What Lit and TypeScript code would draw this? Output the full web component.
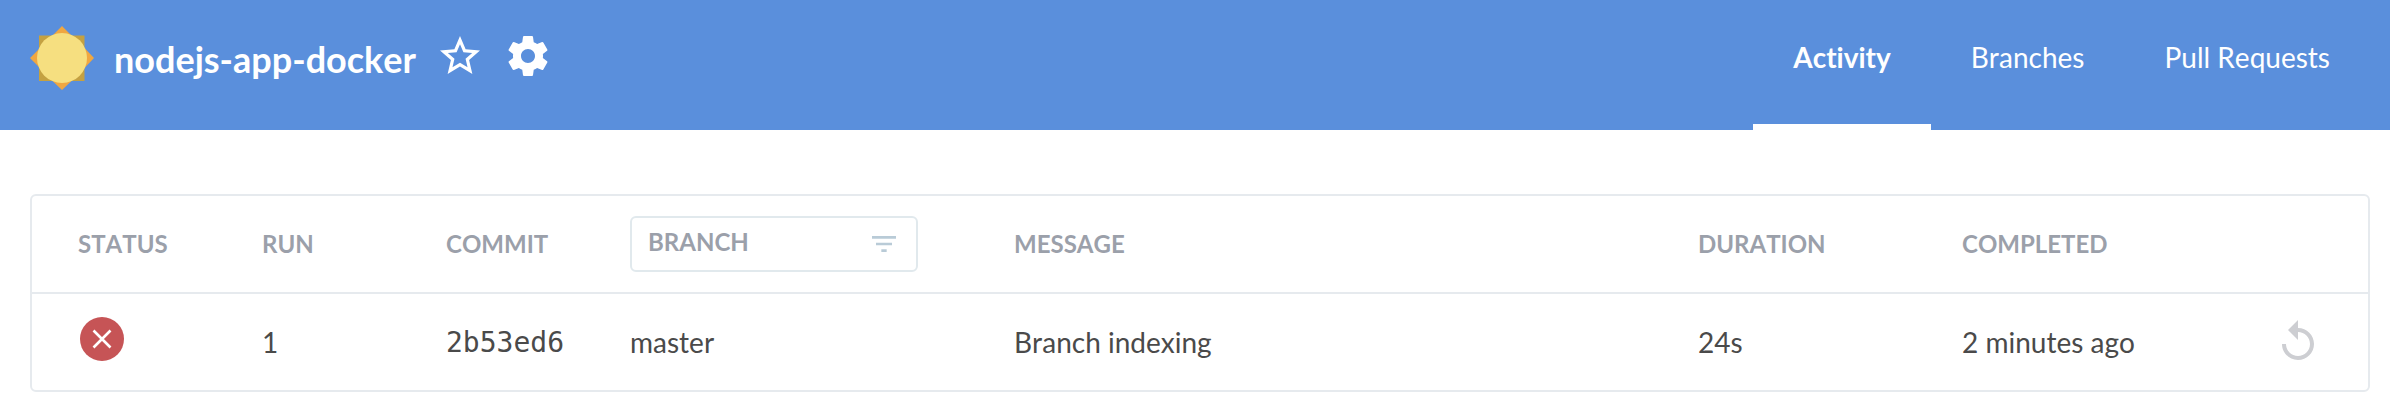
import { LitElement, html, css, svg } from "lit";
import { customElement, property, state } from "lit/decorators.js";
import { classMap } from "lit/directives/class-map.js";

interface Run {
  id: number;
  commit: string;
  branch: string;
  message: string;
  duration: string;
  completed: string;
}

const sunIcon = svg`
  <path d="M9 9.500h45.500v45.500h-45.500Z" fill="#c4a142"/>
  <path d="M32 0 41.500 9.500H22.500ZM64 32 54.500 22v20ZM32 64 22.500 55h19ZM0 32 9 23v18Z" fill="#f0a741"/>
  <circle cx="32" cy="32" r="25" fill="#f6df80"/>`;

@customElement("pipeline-header")
export class PipelineHeader extends LitElement {
  @property() name = "";
  @state() private active = "Activity";

  static styles = css`
    :host { display: block; background: #5a8fdc; color: #fff; }
    .bar { display: flex; justify-content: space-between; align-items: stretch; min-height: 130px; padding: 0 20px 0 30px; }
    .identity { display: flex; align-items: center; padding-bottom: 14px; }
    .weather { width: 64px; height: 64px; display: block; }
    .title { margin: 0 20px; padding-top: 2px; font-size: 36px; line-height: 44px; font-weight: 700; }
    .action { background: none; border: 0; padding: 0 0 4px; margin-right: 20px; display: block; color: inherit; cursor: pointer; }
    .glyph { width: 48px; height: 48px; display: block; fill: currentColor; }
    .tabs { display: flex; }
    .tab { display: flex; align-items: center; padding: 0 40px 10px; border-bottom: 6px solid transparent; color: inherit; text-decoration: none; font-size: 28px; line-height: 34px; white-space: nowrap; }
    .tab.active { border-bottom-color: #fff; font-weight: 700; }
  `;

  render() {
    return html`
      <header class="bar">
        <div class="identity">
          <svg class="weather" viewBox="0 0 64 64" aria-hidden="true">${sunIcon}</svg>
          <h1 class="title">${this.name}</h1>
          <button class="action" type="button" aria-label="Favorite">
            <svg class="glyph" viewBox="0 0 24 24"><path d="M22 9.240l-7.190-.620L12 2 9.190 8.630 2 9.240l5.460 4.730L5.820 21 12 17.270 18.180 21l-1.630-7.030L22 9.240zM12 15.400l-3.760 2.270 1-4.280-3.320-2.880 4.380-.380L12 6.100l1.710 4.040 4.380.380-3.320 2.880 1 4.280L12 15.400z"/></svg>
          </button>
          <button class="action" type="button" aria-label="Settings">
            <svg class="glyph" viewBox="0 0 24 24"><path d="M19.430 12.980c.040-.320.070-.640.070-.980s-.030-.660-.070-.980l2.110-1.650c.190-.150.240-.420.120-.640l-2-3.460c-.120-.220-.390-.300-.610-.220l-2.490 1c-.520-.400-1.080-.730-1.690-.980l-.380-2.650C14.460 2.180 14.250 2 14 2h-4c-.250 0-.460.180-.490.420l-.380 2.650c-.610.250-1.170.590-1.690.980l-2.490-1c-.230-.090-.490 0-.610.220l-2 3.460c-.130.220-.070.490.120.640l2.110 1.650c-.040.320-.070.650-.070.980s.030.660.070.980l-2.110 1.650c-.190.150-.240.420-.120.640l2 3.460c.120.220.390.300.610.220l2.490-1c.520.400 1.080.730 1.690.980l.380 2.650c.030.240.240.420.490.420h4c.250 0 .460-.180.490-.420l.380-2.650c.610-.250 1.170-.590 1.690-.980l2.490 1c.230.090.490 0 .610-.220l2-3.460c.120-.220.070-.490-.120-.640l-2.110-1.650zM12 15.500c-1.930 0-3.500-1.570-3.500-3.500s1.570-3.500 3.500-3.500 3.500 1.570 3.500 3.500-1.570 3.500-3.500 3.500z"/></svg>
          </button>
        </div>
        <nav class="tabs">
          ${["Activity", "Branches", "Pull Requests"].map(
            (tab) => html`<a
              class=${classMap({ tab: true, active: tab === this.active })}
              href="#"
              @click=${(e: Event) => { e.preventDefault(); this.active = tab; }}
            >${tab}</a>`
          )}
        </nav>
      </header>
    `;
  }
}

@customElement("runs-table")
export class RunsTable extends LitElement {
  @property({ attribute: false }) runs: Run[] = [];

  static styles = css`
    :host { display: block; border: 2px solid #e6eaee; border-radius: 6px; }
    .table { width: 100%; table-layout: fixed; border-collapse: separate; border-spacing: 0; color: #4a4a4a; font-size: 28px; line-height: 34px; }
    .c-status { width: 230px; }
    .c-short { width: 184px; }
    .c-branch { width: 384px; }
    .c-duration { width: 264px; }
    .c-completed { width: 312px; }
    .c-action { width: 94px; }
    .head, .cell { box-sizing: border-box; height: 96px; padding: 0; text-align: left; vertical-align: middle; }
    .head { height: 98px; border-bottom: 2px solid #e6eaee; color: #9ba0aa; font-size: 24px; line-height: 30px; font-weight: 700; }
    .head:first-child, .cell:first-child { padding-left: 46px; }
    .filter { box-sizing: border-box; display: flex; align-items: center; width: 288px; height: 56px; padding: 0 16px; border: 2px solid #e1e9ed; border-radius: 6px; }
    .query { flex: 1; min-width: 0; padding: 0 0 4px; border: 0; outline: 0; background: none; color: inherit; font: inherit; }
    .query::placeholder { color: #9ba0aa; opacity: 1; }
    .funnel { width: 32px; height: 32px; fill: #b9cbd7; }
    .hash { padding-top: 2px; font-family: "DejaVu Sans Mono", monospace; }
    .badge { width: 48px; height: 48px; display: block; margin-bottom: 6px; }
    .rerun { background: none; border: 0; padding: 0; display: block; color: #cdced2; cursor: pointer; }
    .glyph { width: 48px; height: 48px; display: block; fill: currentColor; }
  `;

  render() {
    return html`
      <table class="table">
        <colgroup>
          <col class="c-status" /><col class="c-short" /><col class="c-short" /><col class="c-branch" />
          <col /><col class="c-duration" /><col class="c-completed" /><col class="c-action" />
        </colgroup>
        <thead>
          <tr>
            <th class="head">STATUS</th>
            <th class="head">RUN</th>
            <th class="head">COMMIT</th>
            <th class="head">
              <label class="filter">
                <input class="query" type="text" placeholder="BRANCH" aria-label="Filter by branch" />
                <svg class="funnel" viewBox="0 0 24 24" aria-hidden="true"><path d="M3 6h18v2H3ZM6 11h12v2H6ZM10 16h4v2h-4Z"/></svg>
              </label>
            </th>
            <th class="head">MESSAGE</th>
            <th class="head">DURATION</th>
            <th class="head">COMPLETED</th>
            <td class="head"></td>
          </tr>
        </thead>
        <tbody>
          ${this.runs.map(
            (run) => html`<tr>
              <td class="cell">
                <svg class="badge" viewBox="0 0 48 48" role="img" aria-label="Failed">
                  <circle cx="24" cy="24" r="22" fill="#c65456" />
                  <path d="M15.500 15.500 32.500 32.500M32.500 15.500 15.500 32.500" stroke="#fff" stroke-width="2.600" />
                </svg>
              </td>
              <td class="cell">${run.id}</td>
              <td class="cell hash">${run.commit}</td>
              <td class="cell">${run.branch}</td>
              <td class="cell">${run.message}</td>
              <td class="cell">${run.duration}</td>
              <td class="cell">${run.completed}</td>
              <td class="cell">
                <button class="rerun" type="button" aria-label="Rerun">
                  <svg class="glyph" viewBox="0 0 24 24"><path d="M12 5V1L7 6l5 5V7c3.310 0 6 2.690 6 6s-2.690 6-6 6-6-2.690-6-6H4c0 4.420 3.580 8 8 8s8-3.580 8-8-3.580-8-8-8z"/></svg>
                </button>
              </td>
            </tr>`
          )}
        </tbody>
      </table>
    `;
  }
}

@customElement("app-root")
export class AppRoot extends LitElement {
  private runs: Run[] = [
    { id: 1, commit: "2b53ed6", branch: "master", message: "Branch indexing", duration: "24s", completed: "2 minutes ago" },
  ];

  static styles = css`
    :host { display: block; background: #fff; font-family: Lato, "Liberation Sans", sans-serif; font-kerning: none; font-variant-ligatures: none; }
    .content { padding: 64px 20px 26px 30px; }
  `;

  render() {
    return html`
      <pipeline-header name="nodejs-app-docker"></pipeline-header>
      <main class="content"><runs-table .runs=${this.runs}></runs-table></main>
    `;
  }
}
